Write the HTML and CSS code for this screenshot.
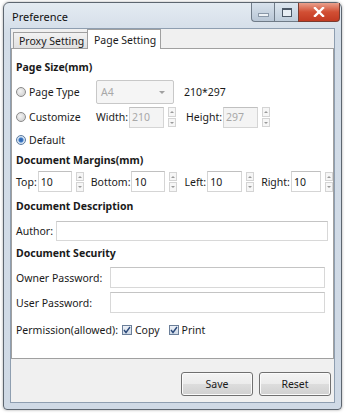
FILE: index.html
```html
<!DOCTYPE html>
<html>
<head>
<meta charset="utf-8">
<link rel="stylesheet" href="styles.css">
</head>
<body>
<div class="window">
  <div class="titlebar">
    <span class="title">Preference</span>
    <div class="caption-btns">
      <div class="cbtn min"><span class="min-bar"></span></div>
      <div class="cbtn max"><span class="max-box"></span></div>
      <div class="cbtn close">
        <svg width="12" height="10" viewBox="0 0 12 10"><path d="M2 1 L10 9 M10 1 L2 9" stroke="#fff" stroke-width="2.4" stroke-linecap="square"/></svg>
      </div>
    </div>
  </div>
  <div class="client">
    <div class="tabs">
      <div class="tab inactive">Proxy Setting</div>
      <div class="tab active">Page Setting</div>
    </div>
    <div class="panel">
      <div class="heading h-first">Page Size(mm)</div>
      <div class="row r-type">
        <span class="radio"></span><span class="rlabel">Page Type</span>
        <div class="combo"><span>A4</span><span class="caret"></span></div>
        <span class="dim">210*297</span>
      </div>
      <div class="row r-custom">
        <span class="radio"></span><span class="rlabel">Customize</span>
        <span class="lbl">Width:</span>
        <div class="spin w35"><div class="sinput dis">210</div><div class="arrows"><span class="up"></span><span class="down"></span></div></div>
        <span class="lbl l-height">Height:</span>
        <div class="spin w35"><div class="sinput dis">297</div><div class="arrows"><span class="up"></span><span class="down"></span></div></div>
      </div>
      <div class="row r-default">
        <span class="radio checked"></span><span class="rlabel">Default</span>
      </div>
      <div class="heading h-margins">Document Margins(mm)</div>
      <div class="row r-margins">
        <span class="lbl">Top:</span>
        <div class="spin w34"><div class="sinput">10</div><div class="arrows"><span class="up"></span><span class="down"></span></div></div>
        <span class="lbl ml">Bottom:</span>
        <div class="spin w34"><div class="sinput">10</div><div class="arrows"><span class="up"></span><span class="down"></span></div></div>
        <span class="lbl ml">Left:</span>
        <div class="spin w35"><div class="sinput">10</div><div class="arrows"><span class="up"></span><span class="down"></span></div></div>
        <span class="lbl ml">Right:</span>
        <div class="spin w30"><div class="sinput">10</div><div class="arrows"><span class="up"></span><span class="down"></span></div></div>
      </div>
      <div class="heading h-desc">Document Description</div>
      <div class="row r-author">
        <span class="lbl">Author:</span>
        <div class="text author"></div>
      </div>
      <div class="heading h-sec">Document Security</div>
      <div class="row r-owner">
        <span class="lbl wlbl">Owner Password:</span>
        <div class="text pw"></div>
      </div>
      <div class="row r-user">
        <span class="lbl wlbl">User Password:</span>
        <div class="text pw"></div>
      </div>
      <div class="row r-perm">
        <span class="lbl">Permission(allowed):</span>
        <span class="check"><svg width="8" height="8" viewBox="0 0 8 8"><path d="M1 4 L3 6.5 L7 1" fill="none" stroke="#2c4a7a" stroke-width="1.4"/></svg></span>
        <span class="lbl">Copy</span>
        <span class="check c2"><svg width="8" height="8" viewBox="0 0 8 8"><path d="M1 4 L3 6.5 L7 1" fill="none" stroke="#2c4a7a" stroke-width="1.4"/></svg></span>
        <span class="lbl">Print</span>
      </div>
    </div>
    <div class="buttons">
      <div class="btn">Save</div>
      <div class="btn">Reset</div>
    </div>
  </div>
</div>
</body>
</html>
```

FILE: styles.css
```css
html, body {
  margin: 0;
  padding: 0;
  background: #ffffff;
}
body {
  width: 345px;
  height: 414px;
  overflow: hidden;
  font-family: "Noto Sans", "Open Sans", sans-serif;
  font-size: 10.5px;
  color: #1a1a1a;
}
.window {
  margin: 2px 0 0 3px;
  width: 339px;
  height: 408px;
  box-sizing: border-box;
  border: 1px solid #5d6670;
  border-radius: 6px 6px 4px 4px;
  background: linear-gradient(#e4ebf2, #d3dde8 30px, #cfd9e5);
  box-shadow: 0 0 3px rgba(0,0,0,0.35);
  display: flex;
  flex-direction: column;
  padding: 0 6px 6px 6px;
}
.titlebar {
  height: 25px;
  display: flex;
  align-items: flex-start;
  justify-content: space-between;
}
.title {
  margin-top: 6px;
  margin-left: 2px;
  font-size: 11px;
  color: #111;
}
.caption-btns {
  display: flex;
  margin-right: -5px;
}
.cbtn {
  height: 19px;
  box-sizing: border-box;
  border: 1px solid #6f7b88;
  border-top: none;
  display: flex;
  align-items: center;
  justify-content: center;
}
.min {
  width: 23px;
  border-radius: 0 0 0 4px;
  background: linear-gradient(#d8e2ec, #b9c7d6);
  border-right: none;
}
.min-bar {
  width: 9px;
  height: 2px;
  background: #eef2f6;
  border: 1px solid #8a98a8;
  margin-top: 6px;
}
.max {
  width: 24px;
  background: linear-gradient(#dde6ef, #bfcddb);
  border-right: none;
}
.max-box {
  width: 8px;
  height: 6px;
  border: 1px solid #4c5866;
  border-top-width: 2px;
  background: #e8eef4;
}
.close {
  width: 42px;
  border-radius: 0 0 4px 0;
  background: linear-gradient(#e9a08c, #d24f34 50%, #c23a22);
  border-color: #7a3b30;
}
.client {
  flex: 1;
  background: #f0f0f0;
  border: 1px solid #8e9eb0;
  display: flex;
  flex-direction: column;
}
.tabs {
  display: flex;
  height: 19px;
  align-items: flex-end;
  padding-left: 2px;
  position: relative;
  z-index: 1;
}
.tab {
  box-sizing: border-box;
  border: 1px solid #a0a0a0;
  border-bottom: none;
  padding: 0 4px;
  display: flex;
  align-items: center;
  white-space: nowrap;
  font-size: 10.5px;
}
.inactive {
  height: 16px;
  background: linear-gradient(#f2f2f2, #e0e0e0);
  width: 74px;
  border-right: none;
  padding-left: 5px;
}
.active {
  height: 20px;
  background: #ffffff;
  width: 74px;
  margin-bottom: -1px;
  padding-left: 6px;
}
.panel {
  height: 311px;
  box-sizing: border-box;
  background: #ffffff;
  border: 1px solid #a0a0a0;
  padding: 9px 5px 0 4px;
  display: flex;
  flex-direction: column;
}
.heading {
  font-weight: bold;
  height: 18px;
  display: flex;
  align-items: center;
}
.h-margins { margin-top: 1px; }
.h-desc { margin-top: 5px; }
.h-sec { margin-top: 3px; }
.row {
  display: flex;
  align-items: center;
}
.r-type { margin-top: 4px; height: 24px; }
.r-custom { margin-top: 2px; height: 22px; }
.r-default { margin-top: 2px; height: 20px; }
.r-margins { margin-top: 2px; height: 21px; }
.r-author { margin-top: 5px; height: 21px; }
.r-owner { margin-top: 5px; height: 21px; }
.r-user { margin-top: 4px; height: 21px; }
.r-perm { margin-top: 8px; height: 18px; }
.radio {
  width: 10px;
  height: 10px;
  box-sizing: border-box;
  border-radius: 50%;
  border: 1px solid #8a8a8a;
  background: radial-gradient(circle at 40% 40%, #f4f4f4, #c8c8c8);
  margin-right: 3px;
  flex: none;
}
.radio.checked {
  background: radial-gradient(circle, #2a5fa8 0, #3b78c6 2px, #cfe0f2 3px, #e8e8e8 5px);
  border-color: #5a7aa0;
}
.rlabel {
  width: 67px;
}
.combo {
  width: 78px;
  height: 24px;
  box-sizing: border-box;
  border: 1px solid #c8c8c8;
  background: #f5f5f5;
  color: #a8a8a8;
  display: flex;
  align-items: center;
  justify-content: space-between;
  padding: 0 8px 0 4px;
  border-radius: 2px;
}
.caret {
  width: 0;
  height: 0;
  border-left: 3px solid transparent;
  border-right: 3px solid transparent;
  border-top: 3px solid #a0a0a0;
}
.dim { margin-left: 10px; }
.lbl { white-space: nowrap; }
.ml { margin-left: 7px; }
.l-height { margin-left: 10px; }
.spin {
  display: flex;
  align-items: center;
  height: 21px;
  margin-left: 1px;
}
.sinput {
  height: 21px;
  box-sizing: border-box;
  border: 1px solid #d5d5d5;
  border-top-color: #c0c0c0;
  background: #fff;
  display: flex;
  align-items: center;
  padding-left: 2px;
  flex: none;
}
.sinput.dis {
  background: #f4f4f4;
  color: #a8a8a8;
}
.w35 .sinput { width: 35px; }
.w34 .sinput { width: 34px; }
.w30 .sinput { width: 30px; }
.arrows {
  margin-left: 4px;
  width: 8px;
  height: 20px;
  display: flex;
  flex-direction: column;
  gap: 1px;
}
.arrows span {
  flex: 1;
  box-sizing: border-box;
  border: 1px solid #d4d4d4;
  background: #f6f6f6;
  position: relative;
}
.arrows .up::after, .arrows .down::after {
  content: "";
  position: absolute;
  left: 1px;
  top: 3px;
  border-left: 2px solid transparent;
  border-right: 2px solid transparent;
}
.arrows .up::after { border-bottom: 2px solid #9a9a9a; }
.arrows .down::after { border-top: 2px solid #9a9a9a; }
.text {
  height: 20px;
  box-sizing: border-box;
  border: 1px solid #d8d8d8;
  border-top-color: #c4c4c4;
  background: #fff;
}
.author {
  margin-left: 3px;
  width: 273px;
}
.wlbl { width: 94px; }
.pw { width: 215px; height: 21px; }
.check {
  width: 10px;
  height: 10px;
  box-sizing: border-box;
  border: 1px solid #6b7f99;
  background: linear-gradient(#eef2f8, #cfd9e6);
  display: flex;
  align-items: center;
  justify-content: center;
  margin-left: 4px;
  margin-right: 3px;
}
.check.c2 { margin-left: 9px; }
.buttons {
  flex: 1;
  display: flex;
  justify-content: flex-end;
  align-items: flex-start;
  padding-top: 13px;
  padding-right: 3px;
  gap: 6px;
}
.btn {
  width: 72px;
  height: 24px;
  box-sizing: border-box;
  border: 1px solid #707070;
  border-radius: 3px;
  background: linear-gradient(#f4f4f4, #ebebeb 50%, #dddddd 51%, #d0d0d0);
  display: flex;
  align-items: center;
  justify-content: center;
  box-shadow: inset 0 0 0 1px #fbfbfb;
}
```
